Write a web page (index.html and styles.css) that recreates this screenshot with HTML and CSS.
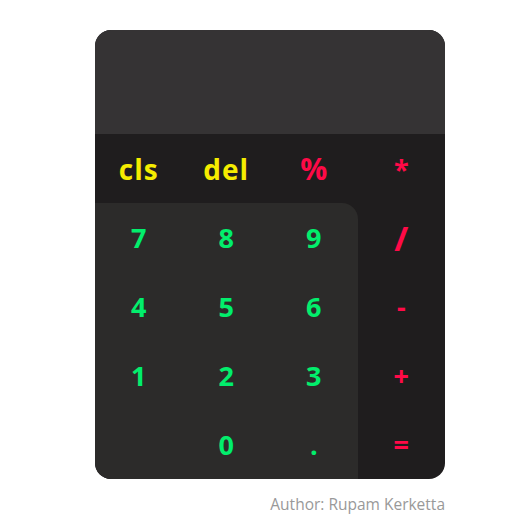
FILE: index.html
```html
<!DOCTYPE html>
<html lang="en">
<head>
<meta charset="utf-8">
<title>Calculator</title>
<link rel="stylesheet" href="styles.css">
</head>
<body>
<div class="wrap">
  <div class="calc">
    <div class="display"></div>
    <div class="keypad">
      <button class="key fn">cls</button>
      <button class="key fn">del</button>
      <button class="key op pct">%</button>
      <button class="key op">*</button>
      <div class="numpad">
        <button class="key num">7</button>
        <button class="key num">8</button>
        <button class="key num">9</button>
        <button class="key num">4</button>
        <button class="key num">5</button>
        <button class="key num">6</button>
        <button class="key num">1</button>
        <button class="key num">2</button>
        <button class="key num">3</button>
        <span class="key"></span>
        <button class="key num">0</button>
        <button class="key num">.</button>
      </div>
      <button class="key op slash">/</button>
      <button class="key op">-</button>
      <button class="key op">+</button>
      <button class="key op">=</button>
    </div>
  </div>
  <div class="author">Author: Rupam Kerketta</div>
</div>
</body>
</html>
```
FILE: styles.css
```css
* { box-sizing: border-box; }
html, body { margin: 0; padding: 0; background: #ffffff; }
body { font-family: "Open Sans", "DejaVu Sans", sans-serif; }
.wrap {
  width: 350px;
  margin: 30px 0 0 95px;
}
.calc {
  width: 350px;
  border-radius: 16px;
  overflow: hidden;
  background: #1f1d1e;
}
.display {
  height: 104px;
  background: #353334;
}
.keypad {
  display: grid;
  grid-template-columns: repeat(4, 1fr);
  grid-template-rows: repeat(5, 69px);
}
.numpad {
  grid-column: 1 / 4;
  grid-row: 2 / 6;
  display: grid;
  grid-template-columns: repeat(3, 1fr);
  grid-template-rows: repeat(4, 69px);
  background: #2c2b2a;
  border-top-right-radius: 16px;
}
.key {
  display: flex;
  align-items: center;
  justify-content: center;
  border: 0;
  background: transparent;
  padding: 0;
  font-family: inherit;
  font-weight: 700;
  font-size: 27px;
  line-height: 1;
}
.fn { color: #f5ec00; font-size: 28px; letter-spacing: 1px; }
.op { color: #ff0a47; }
.pct { font-size: 30px; }
.slash { font-size: 34px; }
.num { color: #02ee6c; }
.author {
  margin-top: 14px;
  text-align: right;
  font-size: 15.5px;
  color: #999999;
}
```
